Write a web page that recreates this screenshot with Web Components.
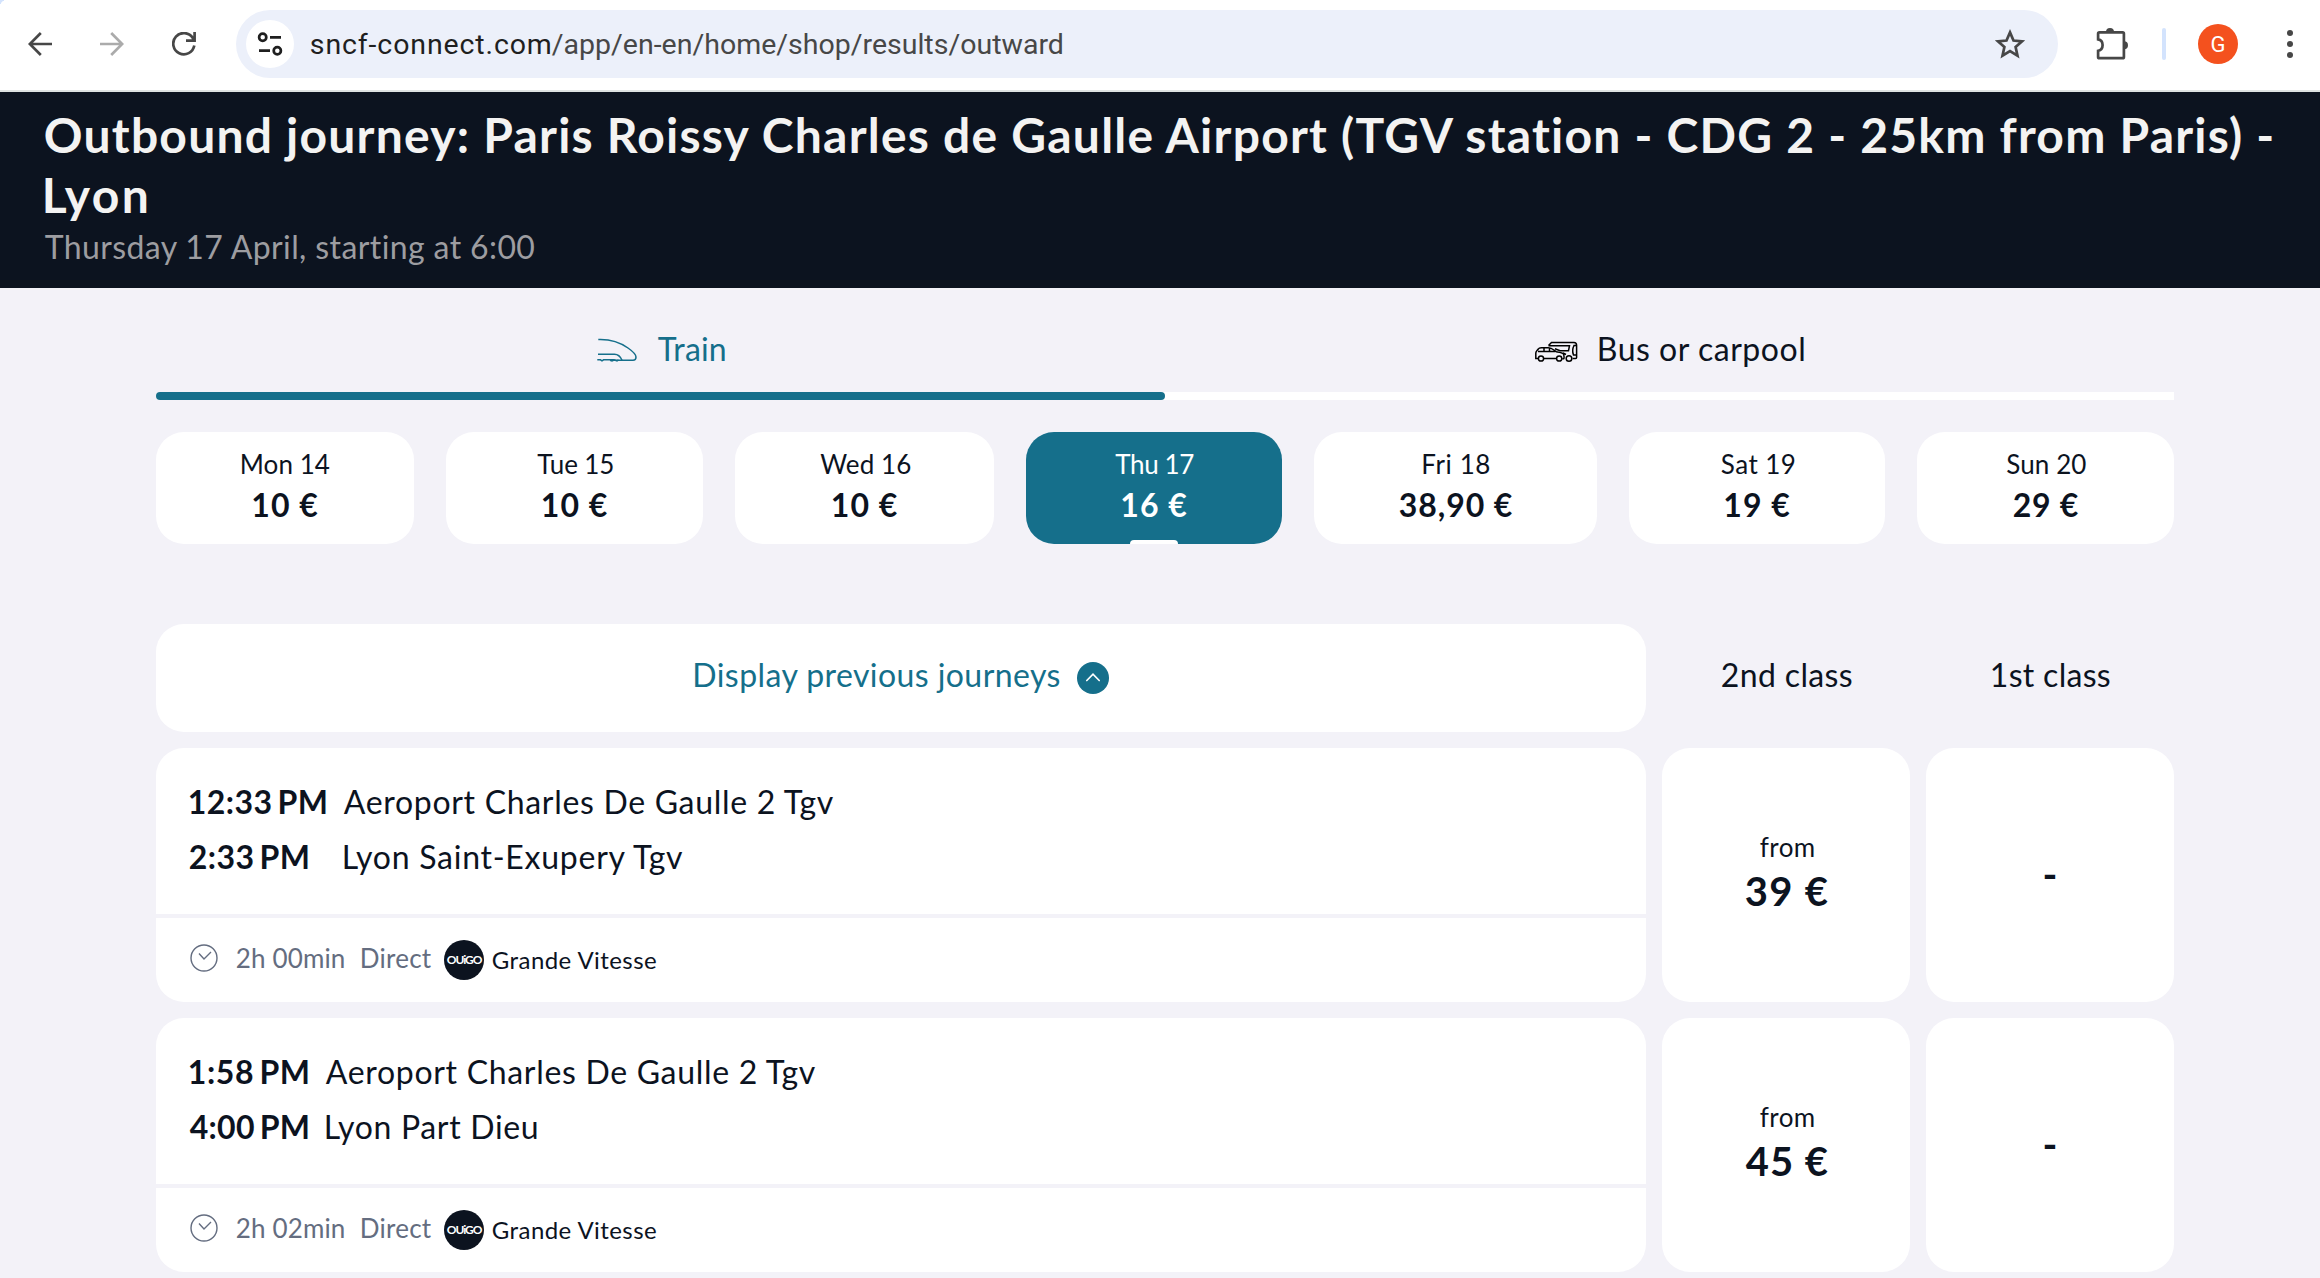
<!DOCTYPE html>
<html lang="en">
<head>
<meta charset="utf-8">
<title>SNCF Connect - Outbound journey</title>
<style>
  body {
    margin: 0;
    background: #f3f2f8;
    color: #0c131f;
    font-family: Lato, "Noto Sans", sans-serif;
    overflow: hidden;
  }
</style>
</head>
<body>
<results-page></results-page>

<script>
/* Text whose letters are spread to a fixed ink width */
class FitText extends HTMLElement {
  constructor() {
    super();
    this.attachShadow({ mode: "open" });
  }

  static get styles() {
    return /* css */`
      :host {
        display: block;
        flex: none;
        white-space: pre;
      }
    `;
  }

  connectedCallback() {
    this.shadowRoot.innerHTML = /* html */`<style>${FitText.styles}</style><slot></slot>`;
    this.fit();
  }

  fit() {
    const text = this.textContent;
    const width = Number(this.getAttribute("w"));
    const style = getComputedStyle(this);
    const ctx = document.createElement("canvas").getContext("2d");
    ctx.font = `${style.fontWeight} ${style.fontSize} ${style.fontFamily}`;
    ctx.wordSpacing = style.wordSpacing;
    const box = ctx.measureText(text);
    const ink = box.actualBoundingBoxLeft + box.actualBoundingBoxRight;
    const spacing = text.length > 1 ? (width - ink) / (text.length - 1) : 0;
    this.style.width = `${width}px`;
    this.style.letterSpacing = `${spacing.toFixed(3)}px`;
    this.style.textIndent = `${(box.actualBoundingBoxLeft + 0.8).toFixed(2)}px`;
  }
}

class BrowserBar extends HTMLElement {
  constructor() {
    super();
    this.attachShadow({ mode: "open" });
  }

  static get styles() {
    return /* css */`
      :host {
        display: flex;
        align-items: center;
        box-sizing: border-box;
        height: 92px;
        padding: 0 26px 2px 28px;
        border-bottom: 2px solid #dfe3e2;
        background: radial-gradient(circle at 6px 6px, #fff 5.5px, transparent 6px) 0 0 / 6px 6px no-repeat,
          linear-gradient(#d3e3fd, #d3e3fd) 0 0 / 4px 4px no-repeat, #fff;
        color: #474747;
        font-family: Roboto, sans-serif;
      }

      svg {
        display: block;
        flex: none;
        fill: none;
        stroke: currentColor;
        stroke-width: 2.7;
      }

      .nav {
        display: flex;
        gap: 48px;
      }

      .forward {
        color: #ababab;
      }

      .address {
        display: flex;
        align-items: center;
        flex: 1;
        box-sizing: border-box;
        height: 68px;
        margin: 0 38px 0 40px;
        padding: 0 33px 0 10px;
        border-radius: 34px;
        background: #ecf0fa;
      }

      .site {
        display: grid;
        place-items: center;
        width: 48px;
        height: 48px;
        margin-right: 16px;
        border-radius: 50%;
        background: #fff;
        color: #1f1f1f;
      }

      .url {
        display: flex;
        flex: 1;
        gap: 1px;
        padding-top: 1px;
        font-size: 28.5px;
        line-height: 34px;
      }

      .domain {
        color: #1f1f1f;
      }

      .divider {
        width: 4px;
        height: 32px;
        margin: 0 32px 0 34px;
        border-radius: 2px;
        background: #d3e3fd;
      }

      .avatar {
        display: grid;
        place-items: center;
        width: 40px;
        height: 40px;
        margin-right: 48px;
        border-radius: 50%;
        background: #f4511e;
        color: #fff;
        font-size: 22px;
      }

      .dots {
        fill: currentColor;
        stroke: none;
      }
    `;
  }

  connectedCallback() {
    this.shadowRoot.innerHTML = /* html */`
    <style>${BrowserBar.styles}</style>
    <div class="nav">
      <svg width="24" height="24"><path d="M24 12H2M12.8 1 1.8 12l11 11"/></svg>
      <svg class="forward" width="24" height="24"><path d="M0 12h22M11.200 1l11 11-11 11"/></svg>
      <svg width="24" height="24"><path d="M22.300 13.500A10.600 10.600 0 1 1 20.800 6L22 9M22.600 0v8.700H14"/></svg>
    </div>
    <div class="address">
      <div class="site">
        <svg width="26" height="26"><circle cx="5.700" cy="6.300" r="3.600"/><path d="M13 6.300h11M2 19.700h11"/><circle cx="20.300" cy="19.700" r="3.600"/></svg>
      </div>
      <div class="url"><fit-text class="domain" w="240">sncf-connect.com</fit-text><fit-text w="511">/app/en-en/home/shop/results/outward</fit-text></div>
      <svg width="30" height="30"><path d="M15 3.400l3.500 8.100 8.600.8-6.500 5.800 1.900 8.500L15 22.100l-7.500 4.500 1.900-8.500-6.500-5.800 8.600-.8z"/></svg>
    </div>
    <svg width="32" height="34"><path d="M3.400 5.400h23.200q1.300 0 1.300 1.300v23.200q0 1.300-1.300 1.300H3.400q-1.300 0-1.300-1.300v-6.100c6-1 6-10.400 0-11.400V6.700q0-1.300 1.300-1.300z"/><path fill="currentColor" stroke="none" d="M10 5a4 4 0 0 1 8 0zM28 14.200a4 4 0 0 1 0 8z"/></svg>
    <div class="divider"></div>
    <div class="avatar">G</div>
    <svg class="dots" width="8" height="30"><circle cx="4" cy="4" r="3"/><circle cx="4" cy="15" r="3"/><circle cx="4" cy="26" r="3"/></svg>`;
  }
}

class JourneyHeader extends HTMLElement {
  constructor() {
    super();
    this.attachShadow({ mode: "open" });
  }

  static get styles() {
    return /* css */`
      :host {
        display: block;
        box-sizing: border-box;
        height: 196px;
        padding: 13px 44px 0;
        background: #0c131f;
        color: #f4f3f2;
      }

      h1 {
        margin: 0;
        font-size: 48px;
        font-weight: 700;
        line-height: 60px;
      }

      .when {
        color: #9d9da1;
        font-size: 32px;
        line-height: 44px;
      }
    `;
  }

  connectedCallback() {
    this.shadowRoot.innerHTML = /* html */`
    <style>${JourneyHeader.styles}</style>
    <h1>
      <fit-text w="2233">Outbound journey: Paris Roissy Charles de Gaulle Airport (TGV station - CDG 2 - 25km from Paris) -</fit-text>
      <fit-text w="102">Lyon</fit-text>
    </h1>
    <fit-text class="when" w="492">Thursday 17 April, starting at 6:00</fit-text>`;
  }
}

class TransportTabs extends HTMLElement {
  constructor() {
    super();
    this.attachShadow({ mode: "open" });
  }

  static get styles() {
    return /* css */`
      :host {
        display: grid;
        grid-template: 104px 8px / 1fr 1fr;
        font-size: 32px;
        line-height: 40px;
      }

      .tab {
        display: flex;
        align-items: center;
        justify-content: center;
        gap: 20px;
        box-sizing: border-box;
        padding-top: 18px;
      }

      .active {
        color: #156f8b;
      }

      .bar {
        grid-column: 1 / 3;
        background: #fff;
        border-radius: 4px 0 0 4px;
      }

      .bar div {
        width: 50%;
        height: 8px;
        border-radius: 4px;
        background: #156f8b;
      }

      svg {
        fill: none;
        stroke: currentColor;
        stroke-width: 1.5;
      }

      .road {
        margin-top: 5px;
        color: #000;
      }
    `;
  }

  connectedCallback() {
    this.shadowRoot.innerHTML = /* html */`
    <style>${TransportTabs.styles}</style>
    <div class="tab active">
      <svg width="40" height="28"><path d="M1.300 4.500C14 4 24 8 31 13c5 3.500 8 7 8 9 0 2-1 3.300-3 3.300H16.500l-1.500.6-2-.6"/><path d="M1 19.300h16.500c4 0 6 2.500 7.500 6M.3 24.800h3.200l1.500 1 1.500-1h10.500l3 1.200 1.500-1.200"/></svg>
      <fit-text w="67">Train</fit-text>
    </div>
    <div class="tab">
      <svg class="road" width="43" height="24"><path d="M13.500 5.500l3-3H39c2 0 2.600 1 2.600 3v12q0 1-1 1h-3M13.500 5.700H34.500l-1 5H25l-5-2"/><path d="M41.500 5.500H39c-1.500 3-1.500 7-.5 9.500h3M28 13l3 1.500M3 18.500H.8V13c0-2 1.500-2.500 2.500-4 .5-1 1.500-1.300 3-1.300h7c3.500 0 5 2 8 4 3 .5 6 .8 7 2 1 1.300.8 5 .5 5h-1.500M9 18.500h12M3 11.500h17.500M9 8v3.500M14.500 8v3.500"/><circle cx="6" cy="18.500" r="2.600"/><circle cx="24.200" cy="18.500" r="2.600"/><circle cx="34" cy="18.500" r="2.800"/></svg>
      <fit-text w="206">Bus or carpool</fit-text>
    </div>
    <div class="bar"><div></div></div>`;
  }
}

class DayCard extends HTMLElement {
  constructor() {
    super();
    this.attachShadow({ mode: "open" });
  }

  static get styles() {
    return /* css */`
      :host {
        display: flex;
        flex-direction: column;
        align-items: center;
        position: relative;
        box-sizing: border-box;
        height: 112px;
        padding-top: 14px;
        border-radius: 28px;
        background: #fff;
      }

      :host([selected]) {
        background: #156f8b;
        color: #fff;
      }

      :host([selected])::after {
        content: "";
        position: absolute;
        bottom: 0;
        width: 48px;
        height: 4px;
        border-radius: 4px 4px 0 0;
        background: #fff;
      }

      .day {
        font-size: 26px;
        line-height: 36px;
      }

      .price {
        font-size: 32px;
        font-weight: 700;
        line-height: 46px;
      }
    `;
  }

  connectedCallback() {
    const [day, dayWidth] = this.getAttribute("day").split("|");
    const [price, priceWidth] = this.getAttribute("price").split("|");
    this.shadowRoot.innerHTML = /* html */`
    <style>${DayCard.styles}</style>
    <fit-text class="day" w="${dayWidth}">${day}</fit-text>
    <fit-text class="price" w="${priceWidth}">${price}</fit-text>`;
  }
}

class JourneyCard extends HTMLElement {
  constructor() {
    super();
    this.attachShadow({ mode: "open" });
  }

  static get styles() {
    return /* css */`
      :host {
        display: block;
        height: 254px;
        border-radius: 28px;
        background: #fff;
      }

      .stops {
        display: grid;
        grid-template-columns: max-content max-content;
        align-content: start;
        column-gap: 18px;
        box-sizing: border-box;
        height: 170px;
        padding: 26px 33px 0;
        border-bottom: 4px solid #f3f2f8;
        font-size: 32px;
        line-height: 55px;
      }

      .time {
        font-weight: 700;
        word-spacing: -3px;
      }

      .details {
        display: flex;
        align-items: center;
        box-sizing: border-box;
        height: 84px;
        padding: 0 33px 4px;
        color: #646d80;
        font-size: 26px;
        line-height: 34px;
      }

      .muted {
        margin-left: 18px;
      }

      .logo {
        display: grid;
        place-items: center;
        width: 40px;
        height: 40px;
        margin: 4px 8px 0 13px;
        border-radius: 50%;
        background: #0c131f;
        color: #fff;
        font-size: 12px;
        font-weight: 700;
        line-height: 16px;
      }

      .carrier {
        margin-top: 3px;
        color: #0c131f;
        font-size: 24px;
      }

      svg {
        flex: none;
        fill: none;
        stroke: currentColor;
        stroke-width: 1.4;
      }
    `;
  }

  connectedCallback() {
    const text = (name, cls) => {
      const [value, width] = this.getAttribute(name).split("|");
      return `<fit-text class="${cls}" w="${width}">${value}</fit-text>`;
    };
    this.shadowRoot.innerHTML = /* html */`
    <style>${JourneyCard.styles}</style>
    <div class="stops">
      ${text("departs", "time")}${text("from", "place")}
      ${text("arrives", "time")}${text("to", "place")}
    </div>
    <div class="details">
      <svg width="29" height="28"><circle cx="15" cy="14" r="13"/><path d="M10 9.500l5 5.500 7-7"/></svg>
      ${text("duration", "muted")}
      <fit-text class="muted" w="70">Direct</fit-text>
      <div class="logo"><fit-text w="36">OUiGO</fit-text></div>
      <fit-text class="carrier" w="164">Grande Vitesse</fit-text>
    </div>`;
  }
}

class FareCell extends HTMLElement {
  constructor() {
    super();
    this.attachShadow({ mode: "open" });
  }

  static get styles() {
    return /* css */`
      :host {
        display: flex;
        flex-direction: column;
        align-items: center;
        justify-content: center;
        box-sizing: border-box;
        height: 254px;
        padding-bottom: 2px;
        border-radius: 28px;
        background: #fff;
      }

      .from {
        font-size: 26px;
        line-height: 34px;
      }

      .price {
        font-size: 40px;
        font-weight: 700;
        line-height: 54px;
      }
    `;
  }

  connectedCallback() {
    const price = this.getAttribute("price");
    this.shadowRoot.innerHTML = /* html */`
    <style>${FareCell.styles}</style>
    ${price
      ? `<fit-text class="from" w="54">from</fit-text><fit-text class="price" w="82">${price}</fit-text>`
      : `<span class="price">-</span>`}`;
  }
}

class ResultsPage extends HTMLElement {
  constructor() {
    super();
    this.attachShadow({ mode: "open" });
  }

  static get styles() {
    return /* css */`
      :host {
        display: block;
        height: 1278px;
        overflow: hidden;
      }

      main {
        width: 2018px;
        margin-left: 156px;
      }

      .days {
        display: grid;
        grid-template-columns: 258px 257px 259px 256px 283px 256px 257px;
        gap: 32px;
        margin: 32px 0 80px;
      }

      .results {
        display: grid;
        grid-template-columns: 1490px 248px 248px;
        gap: 16px;
        font-size: 32px;
        line-height: 40px;
      }

      .previous {
        display: flex;
        align-items: center;
        justify-content: center;
        gap: 17px;
        height: 108px;
        border-radius: 28px;
        background: #fff;
        color: #156f8b;
      }

      .previous fit-text {
        padding-bottom: 6px;
      }

      .class {
        place-self: center;
        padding-bottom: 6px;
      }
    `;
  }

  connectedCallback() {
    this.shadowRoot.innerHTML = /* html */`
    <style>${ResultsPage.styles}</style>
    <browser-bar></browser-bar>
    <journey-header></journey-header>
    <main>
      <transport-tabs></transport-tabs>
      <div class="days">
        <day-card day="Mon 14|88" price="10 €|65"></day-card>
        <day-card day="Tue 15|76" price="10 €|65"></day-card>
        <day-card day="Wed 16|90" price="10 €|65"></day-card>
        <day-card day="Thu 17|79" price="16 €|65" selected></day-card>
        <day-card day="Fri 18|66" price="38,90 €|113"></day-card>
        <day-card day="Sat 19|74" price="19 €|65"></day-card>
        <day-card day="Sun 20|80" price="29 €|65"></day-card>
      </div>
      <div class="results">
        <div class="previous">
          <fit-text w="366">Display previous journeys</fit-text>
          <svg width="32" height="32"><circle cx="16" cy="16" r="16" fill="#156f8b"/><path d="M9.800 18.500l6.200-6.300 6.200 6.300" fill="none" stroke="#fff" stroke-width="1.700" stroke-linecap="round"/></svg>
        </div>
        <fit-text class="class" w="130">2nd class</fit-text>
        <fit-text class="class" w="118">1st class</fit-text>

        <journey-card departs="12:33 PM|136" from="Aeroport Charles De Gaulle 2 Tgv|491"
          arrives="2:33 PM|118" to="Lyon Saint-Exupery Tgv|341" duration="2h 00min|107"></journey-card>
        <fare-cell price="39 €"></fare-cell>
        <fare-cell></fare-cell>

        <journey-card departs="1:58 PM|118" from="Aeroport Charles De Gaulle 2 Tgv|491"
          arrives="4:00 PM|118" to="Lyon Part Dieu|211" duration="2h 02min|107"></journey-card>
        <fare-cell price="45 €"></fare-cell>
        <fare-cell></fare-cell>
      </div>
    </main>`;
  }
}

customElements.define("fit-text", FitText);
customElements.define("browser-bar", BrowserBar);
customElements.define("journey-header", JourneyHeader);
customElements.define("transport-tabs", TransportTabs);
customElements.define("day-card", DayCard);
customElements.define("journey-card", JourneyCard);
customElements.define("fare-cell", FareCell);
customElements.define("results-page", ResultsPage);
</script>
</body>
</html>
